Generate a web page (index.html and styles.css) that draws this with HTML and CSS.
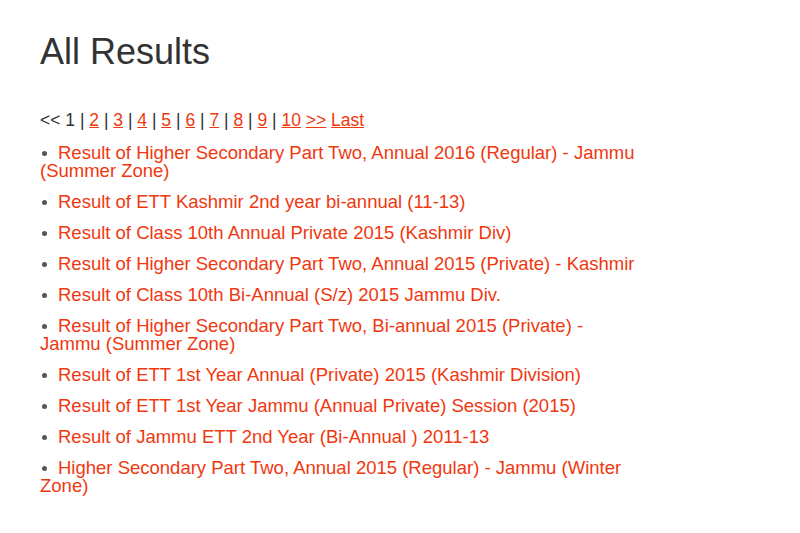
FILE: index.html
```html
<!DOCTYPE html>
<html lang="en">
<head>
    <meta charset="UTF-8">
    <meta name="viewport" content="width=device-width, initial-scale=1.0">
    <title>All Results</title>
    <link rel="stylesheet" href="styles.css">
</head>
<body>
    <div class="content">
        <h1>All Results</h1>

        <!-- Pager -->
        <div class="pager">
            &lt;&lt; 1 | <a href="#">2</a> | <a href="#">3</a> | <a href="#">4</a> | <a href="#">5</a> | <a href="#">6</a> | <a href="#">7</a> | <a href="#">8</a> | <a href="#">9</a> | <a href="#">10</a> <a href="#">&gt;&gt;</a> <a href="#">Last</a>
        </div>

        <ul class="results">
            <li><a href="#">Result of Higher Secondary Part Two, Annual 2016 (Regular) - Jammu (Summer Zone)</a></li>
            <li><a href="#">Result of ETT Kashmir 2nd year bi-annual (11-13)</a></li>
            <li><a href="#">Result of Class 10th Annual Private 2015 (Kashmir Div)</a></li>
            <li><a href="#">Result of Higher Secondary Part Two, Annual 2015 (Private) - Kashmir</a></li>
            <li><a href="#">Result of Class 10th Bi-Annual (S/z) 2015 Jammu Div.</a></li>
            <li><a href="#">Result of Higher Secondary Part Two, Bi-annual 2015 (Private) - Jammu (Summer Zone)</a></li>
            <li><a href="#">Result of ETT 1st Year Annual (Private) 2015 (Kashmir Division)</a></li>
            <li><a href="#">Result of ETT 1st Year Jammu (Annual Private) Session (2015)</a></li>
            <li><a href="#">Result of Jammu ETT 2nd Year (Bi-Annual ) 2011-13</a></li>
            <li><a href="#">Higher Secondary Part Two, Annual 2015 (Regular) - Jammu (Winter Zone)</a></li>
        </ul>
    </div>
</body>
</html>
```

FILE: styles.css
```css
body {
    margin: 0;
    font-family: "Liberation Sans", Arial, sans-serif;
    color: #333;
    background-color: #fff;
}

.content {
    width: 602px;
    padding: 31px 40px 0 40px;
}

h1 {
    margin: 0 0 37px 0;
    font-size: 36px;
    font-weight: normal;
    color: #333;
}

a {
    color: #f0380f;
}

.pager {
    font-size: 17.5px;
    color: #333;
}

.results {
    list-style: none;
    margin: 13px 0 0 0;
    padding: 0;
    font-size: 18.5px;
    line-height: 18px;
}

.results li {
    margin-bottom: 13px;
}

/* small grey dot in front of each result */
.results li:before {
    content: "";
    display: inline-block;
    width: 5px;
    height: 5px;
    margin: 0 11px 0 2px;
    border-radius: 50%;
    background-color: #555;
    vertical-align: 3px;
}

.results a {
    text-decoration: none;
}
```
